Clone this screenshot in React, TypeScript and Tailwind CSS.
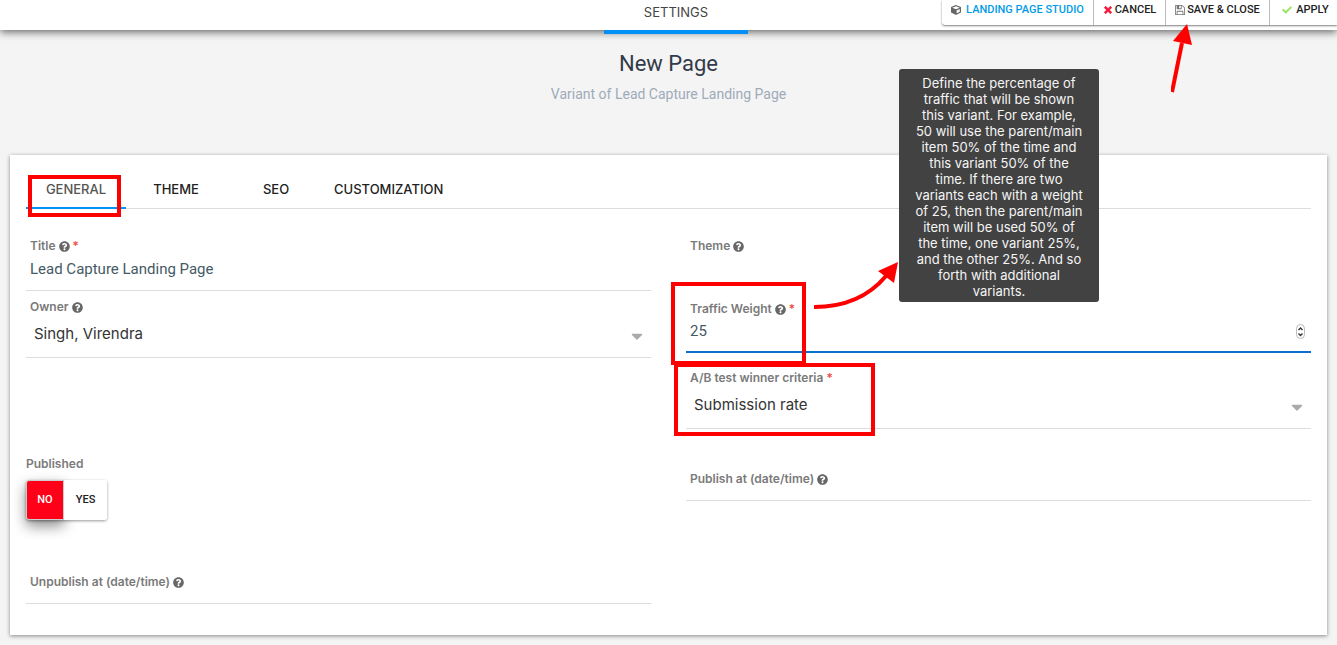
import { useState, type ReactNode } from 'react';
import { FaCaretDown, FaCheck, FaCube, FaQuestionCircle, FaTimes } from 'react-icons/fa';

const TABS = ['General', 'Theme', 'SEO', 'Customization'];

const TOOLTIP = `Define the percentage of
traffic that will be shown
this variant. For example,
50 will use the parent/main
item 50% of the time and
this variant 50% of the
time. If there are two
variants each with a weight
of 25, then the parent/main
item will be used 50% of
the time, one variant 25%,
and the other 25%. And so
forth with additional
variants.`;

interface FieldProps {
  id: string;
  label: string;
  help?: boolean;
  required?: boolean;
  className?: string;
  children?: ReactNode;
}

const Field = ({ id, label, help, required, className = '', children }: FieldProps) => (
  <div className={`relative ${className}`}>
    <label htmlFor={id} className="flex h-5 items-center gap-[3px] pl-1 font-['Inter'] text-[12px] font-semibold text-[#7a7a7a]">
      {label}
      {help && <FaQuestionCircle size={11} className="text-[#666]" />}
      {required && <span className="font-medium text-[#f44336]">*</span>}
    </label>
    {children}
  </div>
);

interface SelectProps {
  id: string;
  options: string[];
}

const Select = ({ id, options }: SelectProps) => (
  <div className="relative">
    <select
      id={id}
      className="block h-[41px] w-full appearance-none border-b border-[#ddd] bg-transparent pb-[6px] pl-2 font-['Inter'] text-[15px] text-[#333] outline-none"
    >
      {options.map((option) => (
        <option key={option}>{option}</option>
      ))}
    </select>
    <FaCaretDown size={18} className="pointer-events-none absolute top-[10px] right-[5px] text-[#aaa]" />
  </div>
);

const SaveIcon = () => (
  <svg viewBox="0 128 1536 1536" className="size-[10px] text-[#777]" fill="currentColor">
    <path d="M384 1536h768v-384h-768v384zm896 0h128v-896q0-14-10-38.5t-20-34.5l-281-281q-10-10-34-20t-39-10v416q0 40-28 68t-68 28h-576q-40 0-68-28t-28-68v-416h-128v1280h128v-416q0-40 28-68t68-28h832q40 0 68 28t28 68v416zm-384-928v-320q0-13-9.5-22.5t-22.5-9.5h-192q-13 0-22.5 9.5t-9.5 22.5v320q0 13 9.5 22.5t22.5 9.5h192q13 0 22.5-9.5t9.5-22.5zm640 32v928q0 40-28 68t-68 28h-1344q-40 0-68-28t-28-68v-1344q0-40 28-68t68-28h928q40 0 88 20t76 48l280 280q28 28 48 76t20 88z" />
  </svg>
);

const toolButton = 'flex items-center border-r border-[#bbb] pb-[5px] text-[11px] font-medium whitespace-nowrap uppercase';

const App = () => {
  const [activeTab, setActiveTab] = useState('General');
  const [published, setPublished] = useState(false);

  return (
    <div className="min-h-screen overflow-x-hidden bg-[#f4f4f4] pb-[10px] font-['Roboto',sans-serif]">
      {/* Top bar */}
      <header className="relative grid h-[30px] grid-cols-[1fr_144px_1fr] bg-white pl-[15px] shadow-[0_2px_8px_rgba(0,0,0,0.6)]">
        <a href="#settings" className="col-start-2 h-[34px] border-b-4 border-[#0090f7] pt-[2px] text-center font-['Inter'] text-[13px] leading-5 text-[#444]">
          SETTINGS
        </a>
        <div className="relative flex h-[25px] justify-end">
          <div className="flex rounded-bl-[3px] bg-white text-[#222] shadow-[0_1px_2px_rgba(0,0,0,0.5)]">
            <button className={`${toolButton} w-[152px] justify-center gap-[5px] text-[#039be5]`}>
              <FaCube size={10} className="text-[#666]" />
              Landing Page Studio
            </button>
            <button className={`${toolButton} w-[72px] justify-center gap-[2px]`}>
              <FaTimes size={10} className="text-[#f5173b]" stroke="currentColor" strokeWidth={50} />
              Cancel
            </button>
            <button className={`${toolButton} w-[104px] justify-center gap-[2px]`}>
              <SaveIcon />
              Save &amp; Close
            </button>
            <button className="flex w-[67px] items-center justify-center gap-1 pb-[5px] pr-1 pl-2 text-[11px] font-medium uppercase">
              <FaCheck size={10} className="text-[#9be564]" />
              Apply
            </button>
          </div>
          {/* Pointer to the save button */}
          <svg className="pointer-events-none absolute top-6 right-[142px] h-[70px] w-6" viewBox="0 0 24 70">
            <path d="M1 68 L11 19" stroke="#f00" strokeWidth="4" fill="none" />
            <path d="M16 0 L21 21 L2 17 Z" fill="#f00" />
          </svg>
        </div>
      </header>

      <div className="pt-[21px] pb-[51px] text-center">
        <h1 className="text-[22px] leading-[26px] text-[#333a4a]">New Page</h1>
        <p className="mt-[7px] text-[14px] leading-5 text-[#9eabb9]">Variant of Lead Capture Landing Page</p>
      </div>

      <main className="mx-[10px] bg-white px-4 pb-[31px] shadow-[0_1px_4px_rgba(0,0,0,0.45)]">
        <nav className="flex h-[54px] border-b border-[#ddd] pt-4">
          {TABS.map((tab) => (
            <div key={tab} className="relative min-w-[100px]">
              <button
                onClick={() => setActiveTab(tab)}
                className={`h-[38px] w-full border-b-2 px-2 pt-[2px] font-['Inter'] text-[13px] font-medium uppercase ${
                  activeTab === tab ? 'border-[#0090f7] text-[#555]' : 'border-transparent text-[#222]'
                }`}
              >
                {tab}
              </button>
              {tab === 'General' && (
                <div className="pointer-events-none absolute top-1 left-[2px] h-[42px] w-[93px] border-4 border-[#f00]" />
              )}
            </div>
          ))}
        </nav>

        <form className="grid grid-cols-2 gap-x-[35px]" onSubmit={(e) => e.preventDefault()}>
          <div>
            <Field id="title" label="Title" help required className="mt-[27px]">
              <input
                id="title"
                defaultValue="Lead Capture Landing Page"
                className="block h-[35px] w-full border-b border-[#ddd] pb-2 pl-1 text-[15px] text-[#455a64] outline-none"
              />
            </Field>
            <Field id="owner" label="Owner" help className="mt-[6px]">
              <Select id="owner" options={['Singh, Virendra']} />
            </Field>

            <fieldset className="mt-24">
              <legend className="h-5 font-['Inter'] text-[12px] leading-5 font-semibold text-[#7a7a7a]">Published</legend>
              <div className="mt-[6px] flex h-10 w-[81px] rounded-[3px] text-[11px] font-medium shadow-[0_1px_3px_rgba(0,0,0,0.4)]">
                <button
                  type="button"
                  onClick={() => setPublished(false)}
                  className={`w-[38px] rounded-l-[3px] border border-[#ccc] ${
                    published ? 'bg-white text-[#222]' : 'bg-[#ff0018] text-white shadow-[0_6px_14px_rgba(0,0,0,0.45)]'
                  }`}
                >
                  NO
                </button>
                <button
                  type="button"
                  onClick={() => setPublished(true)}
                  className={`relative flex-1 rounded-r-[3px] ${published ? 'bg-[#00b49c] text-white' : 'bg-white text-[#222]'}`}
                >
                  YES
                </button>
              </div>
            </fieldset>

            <Field id="unpublish" label="Unpublish at (date/time)" help className="mt-[52px]">
              <input id="unpublish" className="block h-3 w-full border-b border-[#ddd] outline-none" />
            </Field>
          </div>

          <div>
            <Field id="theme" label="Theme" help className="mt-[27px]" />
            <Field id="weight" label="Traffic Weight" help required className="mt-[43px]">
              <div className="relative">
                <input
                  id="weight"
                  type="number"
                  defaultValue={25}
                  className="block h-[34px] w-full [appearance:textfield] border-b-2 border-[#0b6fd0] pb-2 pl-1 text-[15px] text-[#455a64] outline-none [&::-webkit-inner-spin-button]:appearance-none"
                />
                <svg className="pointer-events-none absolute top-[5px] right-[6px] h-4 w-[9px]" viewBox="0 0 9 16">
                  <rect x="0.5" y="0.5" width="8" height="14" rx="4" fill="#fff" stroke="#bbb" />
                  <path d="M2.5 6 L4.5 4 L6.5 6 M2.5 9.5 L4.5 11.5 L6.5 9.5" fill="none" stroke="#333" strokeWidth="1.4" />
                </svg>
              </div>

              {/* Callout: frame, arrow and help bubble */}
              <div className="pointer-events-none absolute -top-[17px] -left-[15px] h-[83px] w-[135px] border-4 border-[#f00]" />
              <svg className="pointer-events-none absolute -top-[39px] left-32 h-[50px] w-[86px]" viewBox="0 0 86 50">
                <path d="M0 47 Q46 47 72 16" fill="none" stroke="#f00" strokeWidth="4" />
                <path d="M84 2 L80 23 L64 11 Z" fill="#f00" />
              </svg>
              <div
                role="tooltip"
                className="absolute bottom-[51px] left-[213px] w-[200px] rounded-[3px] bg-[#424242] px-3 pt-[6px] pb-[3px] text-center font-['Inter'] text-[13px] leading-4 whitespace-pre-line text-[#f5f5f5]"
              >
                {TOOLTIP}
              </div>
            </Field>
            <Field id="criteria" label="A/B test winner criteria" required className="mt-[15px]">
              <Select id="criteria" options={['Submission rate', 'Clickthrough rate']} />
              <div className="pointer-events-none absolute -top-[5px] -left-3 h-[73px] w-[201px] border-4 border-[#f00]" />
            </Field>
            <Field id="publish" label="Publish at (date/time)" help className="mt-10">
              <input id="publish" className="block h-3 w-full border-b border-[#ddd] outline-none" />
            </Field>
          </div>
        </form>
      </main>
    </div>
  );
};

export default App;
